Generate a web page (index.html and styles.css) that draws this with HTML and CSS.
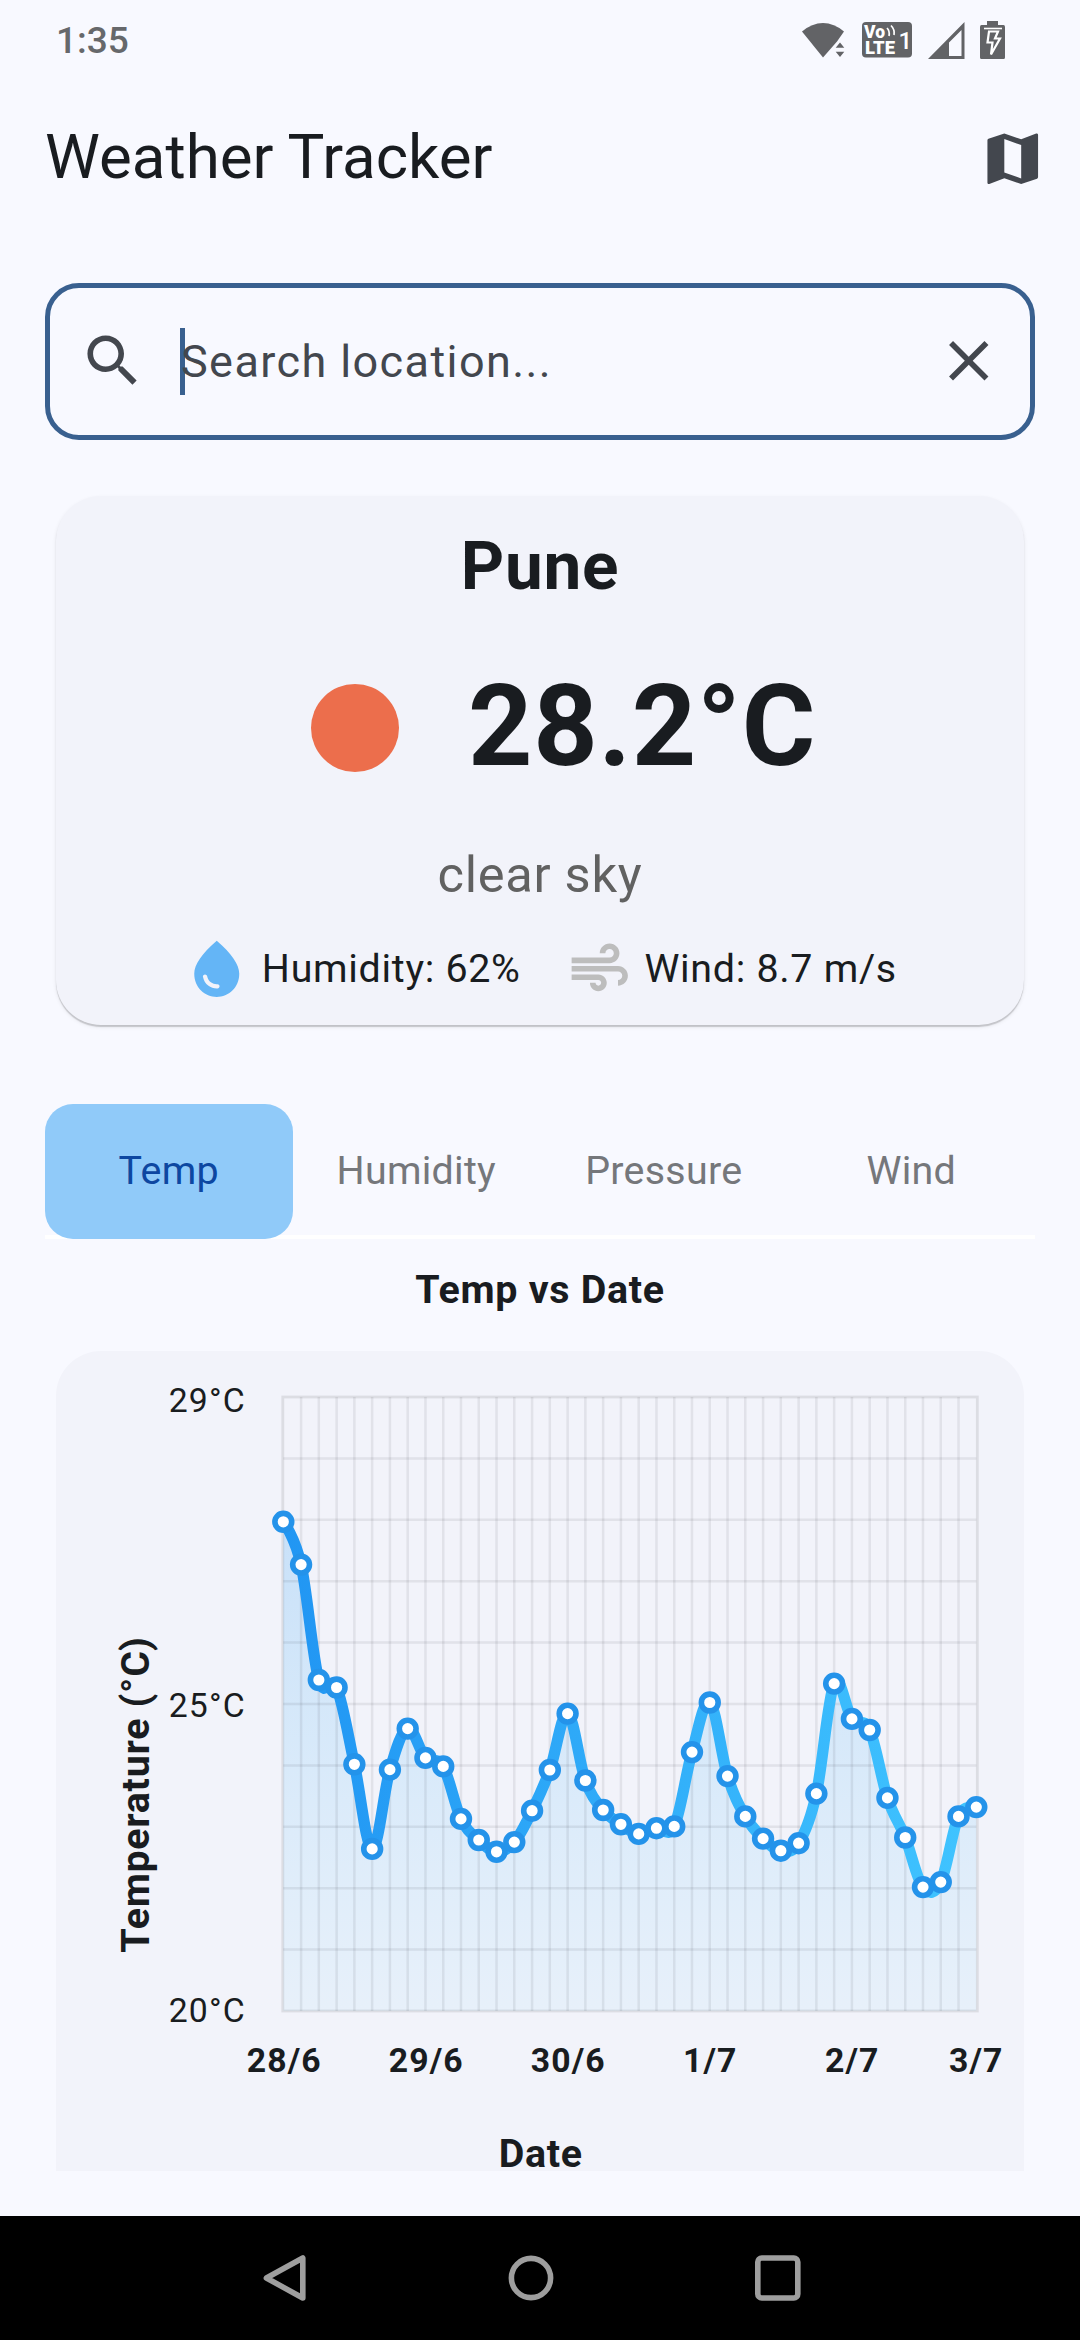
FILE: index.html
```html
<!DOCTYPE html>
<html lang="en">
<head>
<meta charset="utf-8">
<title>Weather Tracker</title>
<link rel="stylesheet" href="styles.css">
</head>
<body>
<div class="screen">
  <div class="status-bar">
    <span class="clock">1:35</span>
    <svg class="status-icons" viewBox="0 0 210 50" width="210" height="50">
      <g fill="#626366">
        <path d="M2 21.5Q12 13 23 13T44 21.5L37 31.5 23 47.5z"/>
        <path d="M40 32.5l4.300 5.200h-8.600zM40 47l4.300-5.200h-8.600z"/>
        <rect x="62" y="12" width="50" height="35.500" rx="4"/>
        <path d="M164.500 12v37H128zM161.500 20L149 32.500V46h12.500z" fill-rule="evenodd"/>
        <path d="M187 11h11v4h5.500q1.500 0 1.500 2v30.500q0 1.500-1.500 1.500h-22q-1.500 0-1.500-1.500V17q0-2 1.500-2h5.500z"/>
      </g>
      <g fill="#fff" class="volte">
        <text x="64" y="28" font-size="18" textLength="21" lengthAdjust="spacingAndGlyphs">Vo</text>
        <text x="65" y="44" font-size="18" textLength="30" lengthAdjust="spacingAndGlyphs">LTE</text>
        <text x="98.500" y="39" font-size="24" class="sim">1</text>
      </g>
      <path d="M87 18q3 3 2 8M91 15.500q4 4 3 9.500" fill="none" stroke="#fff" stroke-width="1.700"/>
      <path d="M184 18.500h18" stroke="#fff" stroke-width="1.600"/>
      <path d="M189 21.500h9l-3 7h5l-9 16 1.500-12h-5z" fill="none" stroke="#fff" stroke-width="2.200"/>
    </svg>
  </div>

  <header class="app-bar">
    <h1>Weather Tracker</h1>
    <svg class="icon" viewBox="0 0 24 24" fill="#43474e"><path d="M20.500 3l-.16.030L15 5.100 9 3 3.360 4.900c-.21.070-.36.250-.36.480V20.500c0 .280.220.500.500.500l.16-.030L9 18.900l6 2.100 5.640-1.900c.21-.07.36-.25.36-.48V3.500c0-.28-.22-.5-.5-.5zM15 19l-6-2.110V5l6 2.110V19z"/></svg>
  </header>

  <main>
    <div class="search">
      <svg class="icon" viewBox="0 0 24 24" fill="#43474e"><path d="M15.500 14h-.79l-.28-.27C15.410 12.590 16 11.110 16 9.500 16 5.910 13.090 3 9.500 3S3 5.910 3 9.500 5.910 16 9.500 16c1.610 0 3.090-.59 4.230-1.570l.27.280v.790l5 4.990L20.490 19l-4.990-5zm-6 0C7.010 14 5 11.990 5 9.500S7.010 5 9.500 5 14 7.010 14 9.500 11.990 14 9.500 14z"/></svg>
      <span class="placeholder">Search location...</span>
      <svg class="icon" viewBox="0 0 24 24" fill="#43474e"><path d="M19 6.410L17.590 5 12 10.590 6.410 5 5 6.410 10.590 12 5 17.590 6.410 19 12 13.410 17.590 19 19 17.590 13.410 12z"/></svg>
    </div>

    <section class="card weather">
      <h2>Pune</h2>
      <div class="current">
        <span class="sun"></span>
        <span class="degrees">28.2°C</span>
      </div>
      <p class="condition">clear sky</p>
      <div class="details">
        <div class="detail">
          <svg class="icon" viewBox="0 0 24 24" fill="#64b5f6"><path d="M12 2c-5.330 4.550-8 8.480-8 11.800 0 4.980 3.800 8.200 8 8.200s8-3.220 8-8.200c0-3.320-2.670-7.250-8-11.800zM7.830 14c.37 0 .67.260.74.620.41 2.220 2.280 2.980 3.640 2.870.43-.02.79.320.79.750 0 .4-.32.730-.72.750-2.130.130-4.620-1.090-5.190-4.120-.08-.45.280-.87.740-.87z"/></svg>
          <span>Humidity: 62%</span>
        </div>
        <div class="detail">
          <svg class="icon" viewBox="0 0 24 24" fill="#bdbdbd"><path d="M14.500 17c0 1.650-1.350 3-3 3s-3-1.350-3-3h2c0 .550.450 1 1 1s1-.45 1-1-.45-1-1-1H2v-2h9.500c1.650 0 3 1.350 3 3zM19 6.500C19 4.570 17.430 3 15.500 3S12 4.570 12 6.500h2c0-.83.670-1.500 1.500-1.500s1.500.670 1.500 1.500S16.330 8 15.500 8H2v2h13.500c1.930 0 3.500-1.570 3.500-3.500zM18.500 11H2v2h16.500c.83 0 1.500.670 1.500 1.500s-.67 1.500-1.500 1.500v2c1.930 0 3.500-1.570 3.500-3.500S20.430 11 18.500 11z"/></svg>
          <span>Wind: 8.7 m/s</span>
        </div>
      </div>
    </section>

    <nav class="tabs">
      <span class="tab active">Temp</span>
      <span class="tab">Humidity</span>
      <span class="tab">Pressure</span>
      <span class="tab">Wind</span>
    </nav>

    <h3>Temp vs Date</h3>

    <section class="card chart-card">
      <svg class="chart" width="967" height="820" viewBox="0 0 967 820">
        <defs>
          <linearGradient id="line" gradientUnits="userSpaceOnUse" x1="0" x2="693" y1="0" y2="0"><stop offset="0" stop-color="#2196f3"/><stop offset="1" stop-color="#40c4ff"/></linearGradient>
          <linearGradient id="area" gradientUnits="userSpaceOnUse" x1="0" x2="0" y1="125" y2="614"><stop offset="0" stop-color="#2196f3" stop-opacity=".2"/><stop offset="1" stop-color="#40c4ff" stop-opacity=".06"/></linearGradient>
        </defs>
        <g transform="translate(227.300 46)">
          <path id="fill-path" fill="url(#area)"/>
          <g id="grid" stroke="#1a1c20" stroke-opacity=".08" stroke-width="2.500"></g>
          <rect x="-.5" y="0" width="694.500" height="614" fill="none" stroke="#1a1c20" stroke-opacity=".1" stroke-width="2.800"/>
          <path id="line-path" fill="none" stroke="url(#line)" stroke-width="11.250"/>
          <g id="dots" fill="#fff" stroke="#2493ea" stroke-width="5.600"></g>
          <g class="y-labels">
            <text x="-114.500" y="14.500">29°C</text>
            <text x="-114.500" y="319.500">25°C</text>
            <text x="-114.500" y="625">20°C</text>
          </g>
          <g class="x-labels">
            <text x="1" y="674.500">28/6</text>
            <text x="143" y="674.500">29/6</text>
            <text x="285" y="674.500">30/6</text>
            <text x="427" y="674.500">1/7</text>
            <text x="569" y="674.500">2/7</text>
            <text x="693" y="674.500">3/7</text>
          </g>
          <text class="axis-title" x="257.500" y="769.500">Date</text>
          <text class="axis-title" transform="translate(-134 397.500) rotate(-90)">Temperature (°C)</text>
        </g>
      </svg>
    </section>
  </main>

  <footer class="nav-bar">
    <svg viewBox="0 0 540 48" width="540" height="48" fill="none" stroke="#9e9e9e" stroke-width="5.600" stroke-linejoin="round">
      <path d="M32.800 4v40L-3.600 24z"/>
      <circle cx="261" cy="24" r="19.600"/>
      <rect x="487.800" y="4" width="40" height="40" rx="4"/>
    </svg>
  </footer>
</div>
<script src="chart.js"></script>
</body>
</html>
```
FILE: styles.css
```css
* { box-sizing: border-box; margin: 0; padding: 0; }
body {
  font-family: Roboto, "Liberation Sans", sans-serif;
  color: #191c20;
  background: #f8f9ff;
}
.screen {
  display: flex;
  flex-direction: column;
  width: 1080px;
  height: 2340px;
  overflow: hidden;
}
.icon { width: 67.5px; height: 67.5px; flex: none; display: block; }

.status-bar {
  height: 79px;
  padding: 0 70px 0 56px;
  display: flex;
  justify-content: space-between;
  align-items: flex-start;
}
.clock {
  margin-top: 18px;
  font-size: 37px;
  font-weight: 500;
  line-height: 46px;
  color: #66686b;
}
.status-icons { margin-top: 10px; }
.volte { font-family: Roboto, sans-serif; font-weight: 900; }
.volte .sim { font-weight: 500; }

.app-bar {
  height: 157.5px;
  padding: 0 33.5px 0 45px;
  display: flex;
  justify-content: space-between;
  align-items: center;
}
.app-bar .icon { margin-top: 2px; }
h1 { font-size: 61.875px; font-weight: 400; line-height: 78px; margin-top: -2px; }

main {
  flex: 1;
  padding: 46px 45px 45px;
  display: flex;
  flex-direction: column;
}
.search {
  height: 157.5px;
  border: 5.6px solid #39608f;
  border-radius: 34px;
  padding: 0 28px 0 29px;
  display: flex;
  align-items: center;
  color: #43474e;
}
.search .icon { margin-top: -1px; }
.placeholder {
  flex: 1;
  margin-left: 33.5px;
  border-left: 5.6px solid #39608f;
  font-size: 45px;
  line-height: 67.5px;
  letter-spacing: 1.4px;
  text-indent: -4px;
}

.card { margin: 0 11.25px; background: #f2f3fa; border-radius: 45px; }
.weather {
  height: 529px;
  margin-top: 56px;
  padding-top: 25px;
  box-shadow: 0 2px 1px rgba(0, 0, 0, .17), 0 2px 4px rgba(0, 0, 0, .08);
  display: flex;
  flex-direction: column;
  align-items: center;
}
h2 { font-size: 67.5px; line-height: 90px; letter-spacing: .7px; }
.current {
  height: 200px;
  margin-top: 17px;
  padding-left: 47px;
  display: flex;
  align-items: center;
  gap: 69px;
}
.sun { width: 88px; height: 88px; border-radius: 50%; background: #ec6e4c; }
.degrees { font-size: 112.5px; line-height: 150px; font-weight: 700; letter-spacing: .7px; margin-top: -3px; }
.condition { margin-top: 17px; font-size: 50.6px; line-height: 60px; letter-spacing: .7px; color: #616161; }
.details { margin-top: 30px; display: flex; gap: 45px; }
.detail {
  display: flex;
  align-items: center;
  gap: 11.25px;
  font-size: 39.4px;
  letter-spacing: .7px;
}

.tabs {
  height: 135px;
  margin-top: 78.5px;
  display: grid;
  grid-template-columns: repeat(4, 1fr);
  background: linear-gradient(#fff, #fff) bottom / 100% 4px no-repeat;
}
.tab {
  display: flex;
  align-items: center;
  justify-content: center;
  padding-bottom: 2px;
  font-size: 39.4px;
  letter-spacing: .28px;
  color: #75777b;
}
.tab.active { background: #90caf9; color: #0d47a1; border-radius: 28px; }

h3 {
  margin-top: 23.5px;
  font-size: 39.4px;
  line-height: 56px;
  letter-spacing: .7px;
  text-align: center;
}
.chart-card {
  margin-top: 33px;
  height: 820px;
  flex: none;
  border-radius: 45px 45px 0 0;
}
.chart { display: block; }
.chart text { fill: #191c20; font-size: 33.75px; letter-spacing: 1.1px; }
.x-labels text { font-weight: 700; text-anchor: middle; }
.chart .axis-title { font-size: 39.4px; font-weight: 700; letter-spacing: .7px; text-anchor: middle; }

.nav-bar {
  height: 124px;
  flex: none;
  background: #000;
  padding: 38px 270px;
}
.nav-bar svg { display: block; overflow: visible; }
```
FILE: chart.js
```js
// Heights of the readings, measured down from the top of the plot.
const levels = [
  124.800, 167.600, 283, 290.500, 367.300, 451.900, 372.600, 331.600, 360.900, 369.400,
  421.900, 443, 454.800, 445.100, 413.700, 373, 316.600, 383.500, 413, 427.300,
  436.900, 431.200, 429.400, 355.100, 305.500, 379.100, 419.400, 441.600, 453.700, 446.200,
  396.600, 286.600, 321.900, 333, 400.900, 440.500, 490.100, 485.100, 419.400, 410.100
];
const width = 693, height = 614, step = width / 39, smooth = 0.35;
const points = levels.map((y, i) => [i * step, y]);
const ns = "http://www.w3.org/2000/svg";

function add(parent, name, attrs) {
  const el = document.createElementNS(ns, name);
  for (const key in attrs) el.setAttribute(key, attrs[key]);
  document.getElementById(parent).appendChild(el);
}

let d = "M" + points[0].join(" ");
let t = [0, 0];
for (let i = 1; i < points.length; i++) {
  const prev = points[i - 1], cur = points[i], next = points[i + 1] || cur;
  const c1 = [prev[0] + t[0], prev[1] + t[1]];
  t = [(next[0] - prev[0]) / 2 * smooth, (next[1] - prev[1]) / 2 * smooth];
  d += "C" + [c1[0], c1[1], cur[0] - t[0], cur[1] - t[1], cur[0], cur[1]].map(n => n.toFixed(2)).join(" ");
}
document.getElementById("line-path").setAttribute("d", d);
document.getElementById("fill-path").setAttribute("d", d + `V${height}H0Z`);

for (let i = 1; i < 39; i++) add("grid", "line", { x1: i * step, x2: i * step, y1: 0, y2: height });
for (let i = 1; i < 10; i++) add("grid", "line", { x1: 0, x2: width, y1: i * height / 10, y2: i * height / 10 });
for (const [x, y] of points) add("dots", "circle", { cx: x, cy: y, r: 8.4 });
```
